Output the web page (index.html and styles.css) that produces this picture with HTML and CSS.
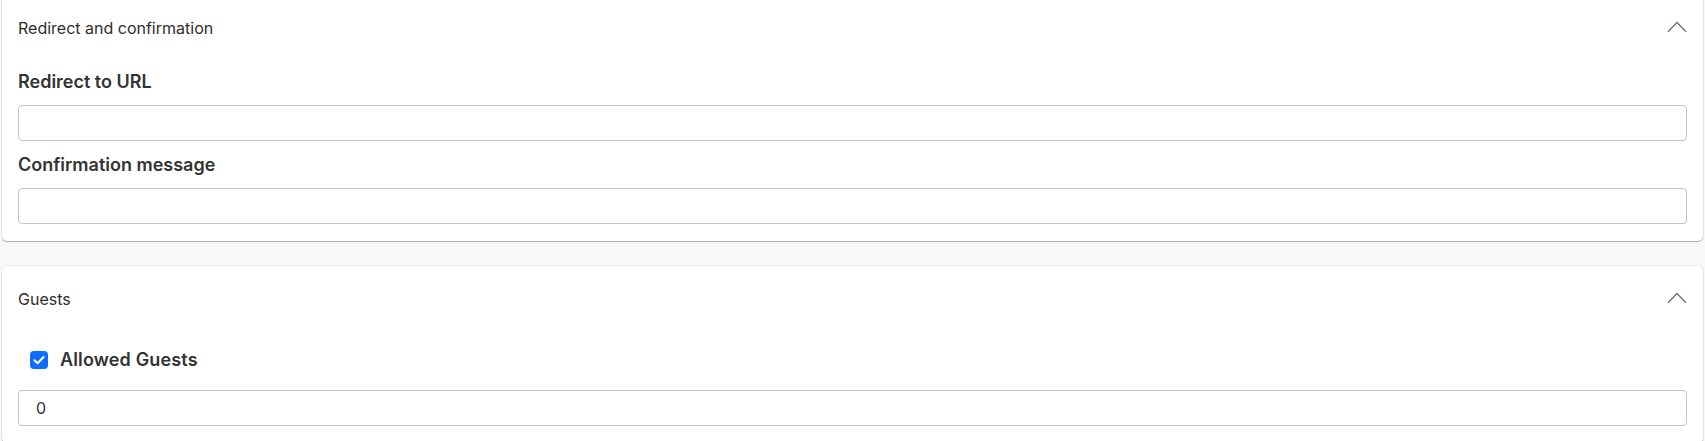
FILE: index.html
```html
<!DOCTYPE html>
<html lang="en">
<head>
<meta charset="utf-8">
<title>Form settings</title>
<link rel="stylesheet" href="styles.css">
</head>
<body>
<div class="page">
  <section class="card">
    <div class="card-header">
      <span class="card-title">Redirect and confirmation</span>
      <svg class="chevron" width="20" height="12" viewBox="0 0 20 12"><path d="M1 10.8 L10 1.5 L19 10.8" fill="none" stroke="#6b7380" stroke-width="1.4"/></svg>
    </div>
    <div class="card-body">
      <label class="field-label first" for="redirect">Redirect to URL</label>
      <input class="text-input" id="redirect" type="text">
      <label class="field-label" for="confirm">Confirmation message</label>
      <input class="text-input" id="confirm" type="text">
    </div>
  </section>

  <section class="card">
    <div class="card-header">
      <span class="card-title">Guests</span>
      <svg class="chevron" width="20" height="12" viewBox="0 0 20 12"><path d="M1 10.8 L10 1.5 L19 10.8" fill="none" stroke="#6b7380" stroke-width="1.4"/></svg>
    </div>
    <div class="card-body">
      <label class="check-row">
        <span class="checkbox"><svg width="18" height="18" viewBox="0 0 18 18"><path d="M4.5 9.2 L7.6 12.2 L13.6 6" fill="none" stroke="#fff" stroke-width="2" stroke-linecap="round" stroke-linejoin="round"/></svg></span>
        <span class="check-label">Allowed Guests</span>
      </label>
      <input class="text-input" type="text" value="0">
    </div>
  </section>
</div>
</body>
</html>
```

FILE: styles.css
```css
html, body {
  margin: 0;
  padding: 0;
  background: #f8f8f8;
  font-family: Inter, "Noto Sans", "Liberation Sans", sans-serif;
  color: #333;
}

.page {
  display: flex;
  flex-direction: column;
  gap: 25px;
  padding: 0 2px;
  margin-top: -5px;
}

.card {
  background: #fff;
  border-radius: 5px;
  box-shadow: 0 1px 1px rgba(0, 0, 0, 0.28), 0 0 0 1px rgba(0, 0, 0, 0.05);
  padding: 0 16px 17px;
}

.card-header {
  display: flex;
  align-items: center;
  justify-content: space-between;
  padding: 22px 0 19px;
  line-height: 22px;
}

.card-title {
  font-size: 16px;
  color: #2e2e2e;
}

.chevron {
  display: block;
  margin-top: -2px;
}

.card-body {
  display: flex;
  flex-direction: column;
}

.field-label {
  font-size: 18px;
  font-weight: 600;
  line-height: 26px;
  color: #333;
  margin: 11px 0 10px;
}

.text-input {
  box-sizing: border-box;
  height: 36px;
  width: 100%;
  border: 1px solid #c4c4c4;
  border-radius: 4px;
  padding: 0 17px;
  font-family: Inter, "Noto Sans", "Liberation Sans", sans-serif;
  font-size: 16px;
  color: #333;
  background: #fff;
  outline: none;
  margin: 0;
}

.check-row {
  display: flex;
  align-items: center;
  gap: 12px;
  margin: 18px 0 17px 12px;
  line-height: 26px;
}

.checkbox {
  display: block;
  width: 18px;
  height: 18px;
  border-radius: 4px;
  background: #0d6efd;
}

.checkbox svg {
  display: block;
}

.check-label {
  font-size: 18px;
  font-weight: 600;
  letter-spacing: 0.15px;
  color: #333;
}
```
